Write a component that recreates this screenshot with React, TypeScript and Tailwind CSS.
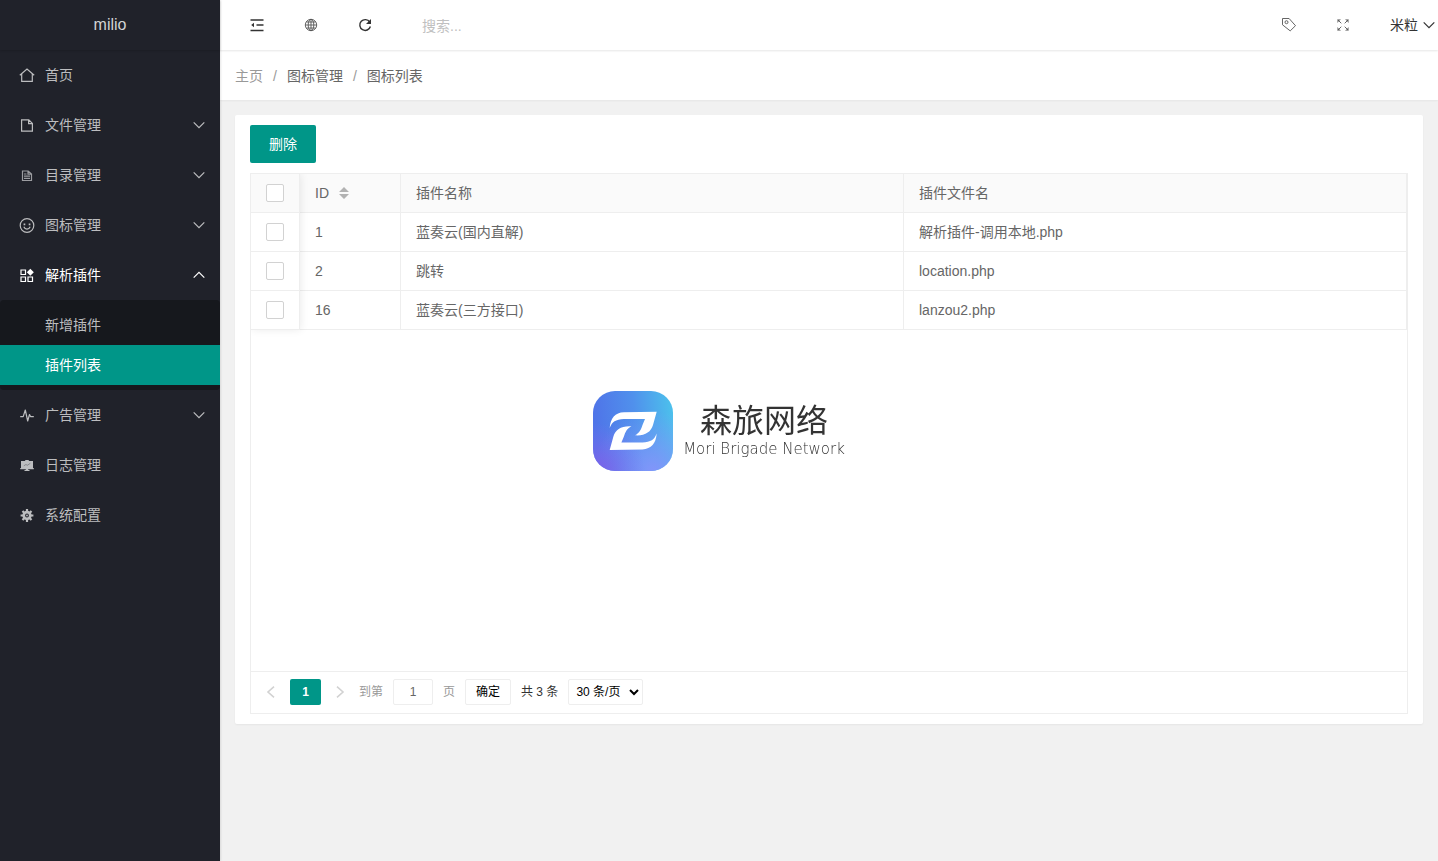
import type { ReactNode } from 'react';

type MenuItem = {
  label: string;
  icon: ReactNode;
  open?: boolean;
  children?: { label: string; active?: boolean }[];
  hasArrow?: boolean;
};

const Icon = ({ children }: { children: ReactNode }) => (
  <svg viewBox="0 0 16 16" className="size-4 shrink-0" fill="none" stroke="currentColor" strokeWidth="1.2" aria-hidden="true">
    {children}
  </svg>
);

const Chevron = ({ up = false }: { up?: boolean }) => (
  <svg viewBox="0 0 12 8" className="h-2 w-3 shrink-0" fill="none" stroke="currentColor" strokeWidth="1.2" aria-hidden="true">
    <path d={up ? 'M.7 6.7 6 1.4l5.3 5.3' : 'M.7 1.3 6 6.6l5.3-5.3'} />
  </svg>
);

const menu: MenuItem[] = [
  {
    label: '首页',
    icon: (
      <Icon>
        <path d="M.8 8.2 8 2l7.2 6.2M2.7 7v7.3h10.6V7" />
      </Icon>
    ),
  },
  {
    label: '文件管理',
    hasArrow: true,
    icon: (
      <Icon>
        <path d="M2.6 2.8h7.2l3.6 3.6v7.8H2.6zM9.6 2.8v3.8h3.8" />
      </Icon>
    ),
  },
  {
    label: '目录管理',
    hasArrow: true,
    icon: (
      <Icon>
        <path d="M3.5 4h5.7l3.3 3v6.5h-9zM9 4v3.200h3.5M5 7h2.500M5 9.200h6M5 11.400h6" opacity="0.8" />
      </Icon>
    ),
  },
  {
    label: '图标管理',
    hasArrow: true,
    icon: (
      <Icon>
        <circle cx="8" cy="8.5" r="6.8" />
        <path d="M4.800 9.800c.7 1.600 1.800 2.400 3.200 2.400s2.500-.8 3.200-2.400" />
        <path d="M4.600 6.500h1.700v1.700H4.600zM9.700 6.500h1.700v1.700H9.700z" fill="currentColor" stroke="none" />
      </Icon>
    ),
  },
  {
    label: '解析插件',
    open: true,
    hasArrow: true,
    icon: (
      <Icon>
        <path d="M2 3h4.500v4.500H2zM2 10h4.500v4.500H2zM9 10h4.500v4.500H9z" />
        <path d="m11.300 1.800 3.500 3.500-3.500 3.500-3.500-3.500z" fill="currentColor" stroke="none" />
      </Icon>
    ),
    children: [{ label: '新增插件' }, { label: '插件列表', active: true }],
  },
  {
    label: '广告管理',
    hasArrow: true,
    icon: (
      <Icon>
        <path d="M1.200 9.600h3L6.300 3l2.400 11 1.800-6.500 1 2.100h3.300" strokeLinejoin="round" />
      </Icon>
    ),
  },
  {
    label: '日志管理',
    icon: (
      <Icon>
        <path d="M2 4h3.800l.8-1h2.800l.8 1H14v7h.8v1.200H9.200v.9h1.300v.9h-5v-.9h1.300v-.9H1.200V11H2z" fill="currentColor" stroke="none" />
        <path d="m4.800 8.800 2-1.200 1.800.6L11.300 6.300" stroke="#20222a" strokeWidth="0.5" opacity="0.7" />
      </Icon>
    ),
  },
  {
    label: '系统配置',
    icon: (
      <Icon>
        <circle cx="8" cy="8.5" r="3.3" strokeWidth="2.800" />
        <path
          d="M8 2.100v2.400M8 12.500v2.400M1.600 8.500H4M12 8.500h2.400M3.500 4l1.700 1.700M10.800 11.300l1.700 1.700M12.500 4l-1.700 1.700M5.200 11.300 3.500 13"
          strokeWidth="2.200"
        />
        <circle cx="8" cy="8.5" r="0.9" fill="currentColor" stroke="none" />
      </Icon>
    ),
  },
];

const rows = [
  { id: 1, name: '蓝奏云(国内直解)', file: '解析插件-调用本地.php' },
  { id: 2, name: '跳转', file: 'location.php' },
  { id: 16, name: '蓝奏云(三方接口)', file: 'lanzou2.php' },
];

const Sidebar = () => (
  <aside className="relative z-20 w-[220px] shrink-0 bg-[#20222a] text-[#bcbdbf] shadow-[1px_0_2px_rgba(0,0,0,0.1)]">
    <div className="flex h-[50px] items-center justify-center text-base text-[#d2d3d4] shadow-[0_1px_2px_rgba(0,0,0,0.15)]">milio</div>
    <nav>
      <ul>
        {menu.map((item) => (
          <li key={item.label}>
            <a href="#" className={`flex h-[50px] items-center gap-[10px] pr-[15px] pl-[19px] ${item.open ? 'text-white' : ''}`}>
              {item.icon}
              <span className="flex-1">{item.label}</span>
              {item.hasArrow && <Chevron up={item.open} />}
            </a>
            {item.children && (
              <ul className="rounded-sm bg-[#16181d] py-[5px]">
                {item.children.map((child) => (
                  <li key={child.label}>
                    <a href="#" className={`flex h-10 items-center pl-[45px] ${child.active ? 'bg-[#009688] text-white' : ''}`}>
                      {child.label}
                    </a>
                  </li>
                ))}
              </ul>
            )}
          </li>
        ))}
      </ul>
    </nav>
  </aside>
);

const Header = () => (
  <header className="relative z-10 flex h-[50px] items-center bg-white pl-[10px] text-[#333] shadow-[0_1px_2px_rgba(0,0,0,0.1)]">
    <button type="button" aria-label="侧边伸缩" className="flex w-[54px] justify-center">
      <Icon>
        <path d="M1.500 3h13M7.500 8h7M1.500 13.500h13" strokeWidth="1.4" />
        <path d="M5 5.800v4.400L2.200 8z" fill="currentColor" stroke="none" />
      </Icon>
    </button>
    <a href="#" aria-label="前台" className="flex w-[54px] justify-center text-[#555]">
      <Icon>
        <g strokeWidth="0.9">
          <circle cx="8" cy="8" r="5.7" />
          <ellipse cx="8" cy="8" rx="2.8" ry="5.7" />
          <path d="M8 2.300v11.400M2.300 8h11.400M3.300 5h9.400M3.300 11h9.400" />
        </g>
      </Icon>
    </a>
    <button type="button" aria-label="刷新" className="flex w-[54px] justify-center">
      <Icon>
        <path d="M12.700 5A5.400 5.400 0 1 0 13.400 9.500" strokeWidth="1.4" />
        <path d="M14 2v5H9z" fill="currentColor" stroke="none" />
      </Icon>
    </button>
    <input
      type="text"
      aria-label="搜索"
      placeholder="搜索..."
      className="ml-[30px] h-[50px] w-40 pt-[2px] outline-none placeholder:text-[#c0c0c0]"
    />
    <div className="ml-auto flex items-center">
      <button type="button" aria-label="便签" className="flex w-[54px] justify-center text-[#555]">
        <Icon>
          <path d="M1.500 1.500h6.600l6.400 7.200-5.300 5.200L1.500 7.800z" strokeWidth="0.9" strokeLinejoin="round" />
          <circle cx="5.500" cy="5.200" r="1.500" strokeWidth="0.9" />
        </Icon>
      </button>
      <button type="button" aria-label="全屏" className="flex w-[54px] justify-center text-[#555]">
        <Icon>
          <path d="M6.300 6.300 3 3M9.700 6.300 13 3M6.300 9.700 3 13M9.700 9.700 13 13" strokeWidth="0.9" />
          <path
            d="M2.300 2.300H6L2.300 6zM13.700 2.300V6L10 2.300zM2.300 13.700V10L6 13.700zM13.700 13.700H10l3.700-3.700z"
            fill="currentColor"
            stroke="none"
            opacity="0.7"
          />
        </Icon>
      </button>
      <button type="button" className="flex items-center gap-[5px] pr-[3px] pl-5">
        米粒
        <Chevron />
      </button>
    </div>
  </header>
);

const Breadcrumb = () => (
  <nav aria-label="breadcrumb" className="flex h-[50px] items-center gap-[10px] bg-white px-[15px] pt-[2px] text-[#666] shadow-[0_1px_2px_rgba(0,0,0,0.05)]">
    <a href="#" className="text-[#999]">主页</a>
    <span className="text-[#999]">/</span>
    <span>图标管理</span>
    <span className="text-[#999]">/</span>
    <span>图标列表</span>
  </nav>
);

const Checkbox = ({ label }: { label: string }) => (
  <input type="checkbox" aria-label={label} className="mx-auto block size-[18px] appearance-none rounded-[2px] border border-[#d2d2d2] bg-white" />
);

const cell = 'h-[39px] border-r border-b border-[#eee] px-[15px] text-left font-normal';

const PluginTable = () => (
  <div className="relative">
    <table className="w-full table-fixed border-separate border-spacing-0">
      <thead>
        <tr className="bg-[#fafafa]">
          <th className={`${cell} w-[49px]`}>
            <Checkbox label="全选" />
          </th>
          <th className={`${cell} w-[101px]`}>
            <span className="flex items-center gap-[10px]">
              ID
              <svg viewBox="0 0 10 12" className="h-3 w-[10px]" fill="#b2b2b2" aria-hidden="true">
                <path d="M0 5 5 0l5 5zM0 7h10l-5 5z" />
              </svg>
            </span>
          </th>
          <th className={cell}>插件名称</th>
          <th className={cell}>插件文件名</th>
        </tr>
      </thead>
      <tbody>
        {rows.map((row) => (
          <tr key={row.id}>
            <td className={cell}>
              <Checkbox label={row.name} />
            </td>
            <td className={cell}>{row.id}</td>
            <td className={cell}>{row.name}</td>
            <td className={cell}>{row.file}</td>
          </tr>
        ))}
      </tbody>
    </table>
    {/* shadow of the pinned checkbox column, cut off on its top and left sides */}
    <div className="pointer-events-none absolute inset-y-0 left-0 w-[49px] shadow-[1px_0_8px_rgba(0,0,0,0.08)] [clip-path:inset(0_-10px_-10px_0)]" />
  </div>
);

const Pager = () => (
  <div className="flex items-center border-t border-[#eee] pt-[7px] pb-2 pl-[15px] text-xs text-[#999]">
    <button type="button" aria-label="上一页" className="w-6 text-[#d2d2d2]">
      <svg viewBox="0 0 10 12" className="h-3 w-[10px]" fill="none" stroke="currentColor" strokeWidth="1.6">
        <path d="M8 .6 2 6l6 5.400" />
      </svg>
    </button>
    <button type="button" className="h-[26px] w-[31px] rounded-[2px] bg-[#009688] font-bold text-white">1</button>
    <button type="button" aria-label="下一页" className="ml-[14px] w-6 text-[#d2d2d2]">
      <svg viewBox="0 0 10 12" className="h-3 w-[10px]" fill="none" stroke="currentColor" strokeWidth="1.6">
        <path d="m2 .6 6 5.400-6 5.400" />
      </svg>
    </button>
    <label className="flex items-center gap-[10px]">
      到第
      <input type="text" defaultValue="1" className="h-[26px] w-10 rounded-[2px] border border-[#eee] text-center text-[#666]" />
      页
    </label>
    <button type="button" className="ml-[10px] h-[26px] w-[46px] rounded-[2px] border border-[#eee] text-black">确定</button>
    <span className="ml-[10px] text-[#333]">共 3 条</span>
    <select aria-label="每页条数" className="ml-[10px] h-[26px] w-[75px] rounded-[2px] border border-[#eee] bg-white pl-[3px] text-black">
      <option>30 条/页</option>
      <option>60 条/页</option>
      <option>90 条/页</option>
    </select>
  </div>
);

const Watermark = () => (
  <div className="pointer-events-none fixed inset-0 z-30 flex items-center justify-center gap-[10px] text-[#333]">
    <svg viewBox="0 0 80 80" className="size-20" aria-hidden="true">
      <defs>
        <linearGradient id="tile" x1="0" y1="0.2" x2="1" y2="0.1">
          <stop offset="0" stopColor="#4f74e8" />
          <stop offset="0.5" stopColor="#5090ec" />
          <stop offset="1" stopColor="#4cc2ec" />
        </linearGradient>
        <radialGradient id="violet" cx="0.05" cy="1" r="0.6">
          <stop offset="0" stopColor="#7c5fe8" />
          <stop offset="1" stopColor="#7c6ff0" stopOpacity="0" />
        </radialGradient>
        <radialGradient id="lilac" cx="0.75" cy="1" r="0.75">
          <stop offset="0" stopColor="#8295fa" />
          <stop offset="1" stopColor="#7c9cf8" stopOpacity="0" />
        </radialGradient>
      </defs>
      <rect width="80" height="80" rx="22" fill="url(#tile)" />
      <rect width="80" height="80" rx="22" fill="url(#lilac)" />
      <rect width="80" height="80" rx="22" fill="url(#violet)" />
      <g fill="#fff">
        <path id="leaf" d="M16.700 37C17.500 27 22 21.500 31 21.200L63.700 20.700 60 34C58 41 52 45 42 44.300C46.500 42 48 38.500 49.500 34L52 28H31C22.500 28.300 19 31 16.700 37Z" />
        <use href="#leaf" transform="rotate(180 40.200 39.800)" />
      </g>
    </svg>
    <div className="flex flex-col items-center">
      <span className="text-[32px] leading-9">森旅网络</span>
      <span className="font-['DejaVu_Sans_Light','DejaVu_Sans',sans-serif] text-[15px] leading-5 font-extralight">Mori Brigade Network</span>
    </div>
  </div>
);

const App = () => {
  return (
    <div className="flex min-h-screen bg-[#f1f1f1] font-['Liberation_Sans','Noto_Sans_CJK_SC',sans-serif] text-sm text-[#666]">
      <Sidebar />
      <div className="min-w-0 flex-1">
        <Header />
        <Breadcrumb />
        <main className="p-[15px]">
          <section className="rounded-[2px] bg-white px-[15px] py-[10px] shadow-[0_1px_2px_rgba(0,0,0,0.05)]">
            <button type="button" className="h-[38px] rounded-[2px] bg-[#009688] px-[19px] text-white">删除</button>
            <div className="mt-[10px] border border-[#eee]">
              <div className="min-h-[497px]">
                <PluginTable />
              </div>
              <Pager />
            </div>
          </section>
        </main>
      </div>
      <Watermark />
    </div>
  );
};

export default App;
